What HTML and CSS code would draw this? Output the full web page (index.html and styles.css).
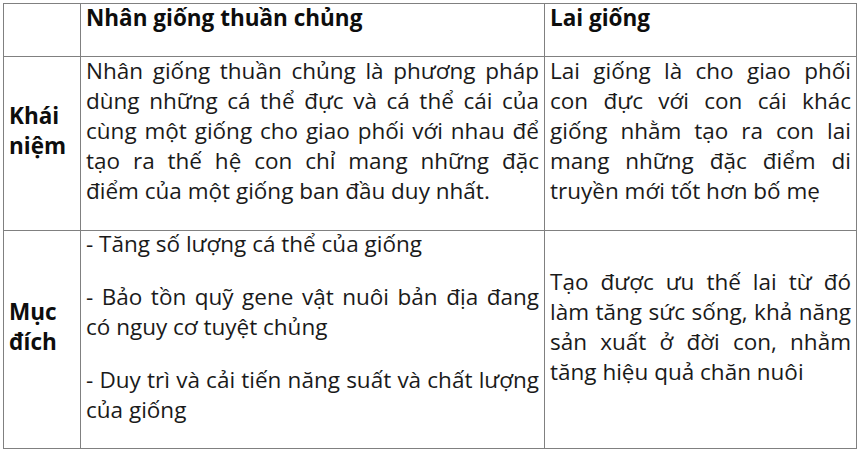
FILE: index.html
```html
<!DOCTYPE html>
<html lang="vi">
<head>
<meta charset="utf-8">
<link rel="stylesheet" href="styles.css">
</head>
<body>
<div class="wrap">
<table class="compare">
  <colgroup>
    <col class="c1">
    <col class="c2">
    <col class="c3">
  </colgroup>
  <tr>
    <td></td>
    <td><p class="head">Nhân giống thuần chủng</p></td>
    <td><p class="head">Lai giống</p></td>
  </tr>
  <tr>
    <td><p class="label">Khái niệm</p></td>
    <td><p>Nhân giống thuần chủng là phương pháp dùng những cá thể đực và cá thể cái của cùng một giống cho giao phối với nhau để tạo ra thế hệ con chỉ mang những đặc điểm của một giống ban đầu duy nhất.</p></td>
    <td><p>Lai giống là cho giao phối con đực với con cái khác giống nhằm tạo ra con lai mang những đặc điểm di truyền mới tốt hơn bố mẹ</p></td>
  </tr>
  <tr>
    <td><p class="label">Mục đích</p></td>
    <td>
      <p class="item">- Tăng số lượng cá thể của giống</p>
      <p class="item">- Bảo tồn quỹ gene vật nuôi bản địa đang có nguy cơ tuyệt chủng</p>
      <p class="item">- Duy trì và cải tiến năng suất và chất lượng của giống</p>
    </td>
    <td><p>Tạo được ưu thế lai từ đó làm tăng sức sống, khả năng sản xuất ở đời con, nhằm tăng hiệu quả chăn nuôi</p></td>
  </tr>
</table>
</div>
</body>
</html>
```

FILE: styles.css
```css
html, body {
  margin: 0;
  padding: 0;
  background: #ffffff;
}
.wrap {
  padding: 3px 2px 0 3px;
}
.compare {
  border-collapse: collapse;
  table-layout: fixed;
  width: 853px;
  font-family: "Open Sans", "Noto Sans", sans-serif;
  font-size: 22.5px;
  line-height: 30px;
  color: #1a1a1a;
}
.c1 { width: 77px; }
.c2 { width: 464px; }
.c3 { width: 312px; }
.compare td {
  border: 1px solid #808080;
  padding: 0 5px;
  vertical-align: middle;
}
.compare p {
  margin: -1px 0 24px 0;
  text-align: justify;
}
.compare p.head {
  margin: -1px 0 23px 0;
  font-weight: 700;
  color: #0d0d0d;
  text-align: left;
}
.compare p.label {
  font-weight: 700;
  color: #0d0d0d;
  text-align: left;
}
.compare p.item {
  margin: 0 0 23px 0;
}
.compare p.item:first-child {
  margin-top: -2px;
}
```
